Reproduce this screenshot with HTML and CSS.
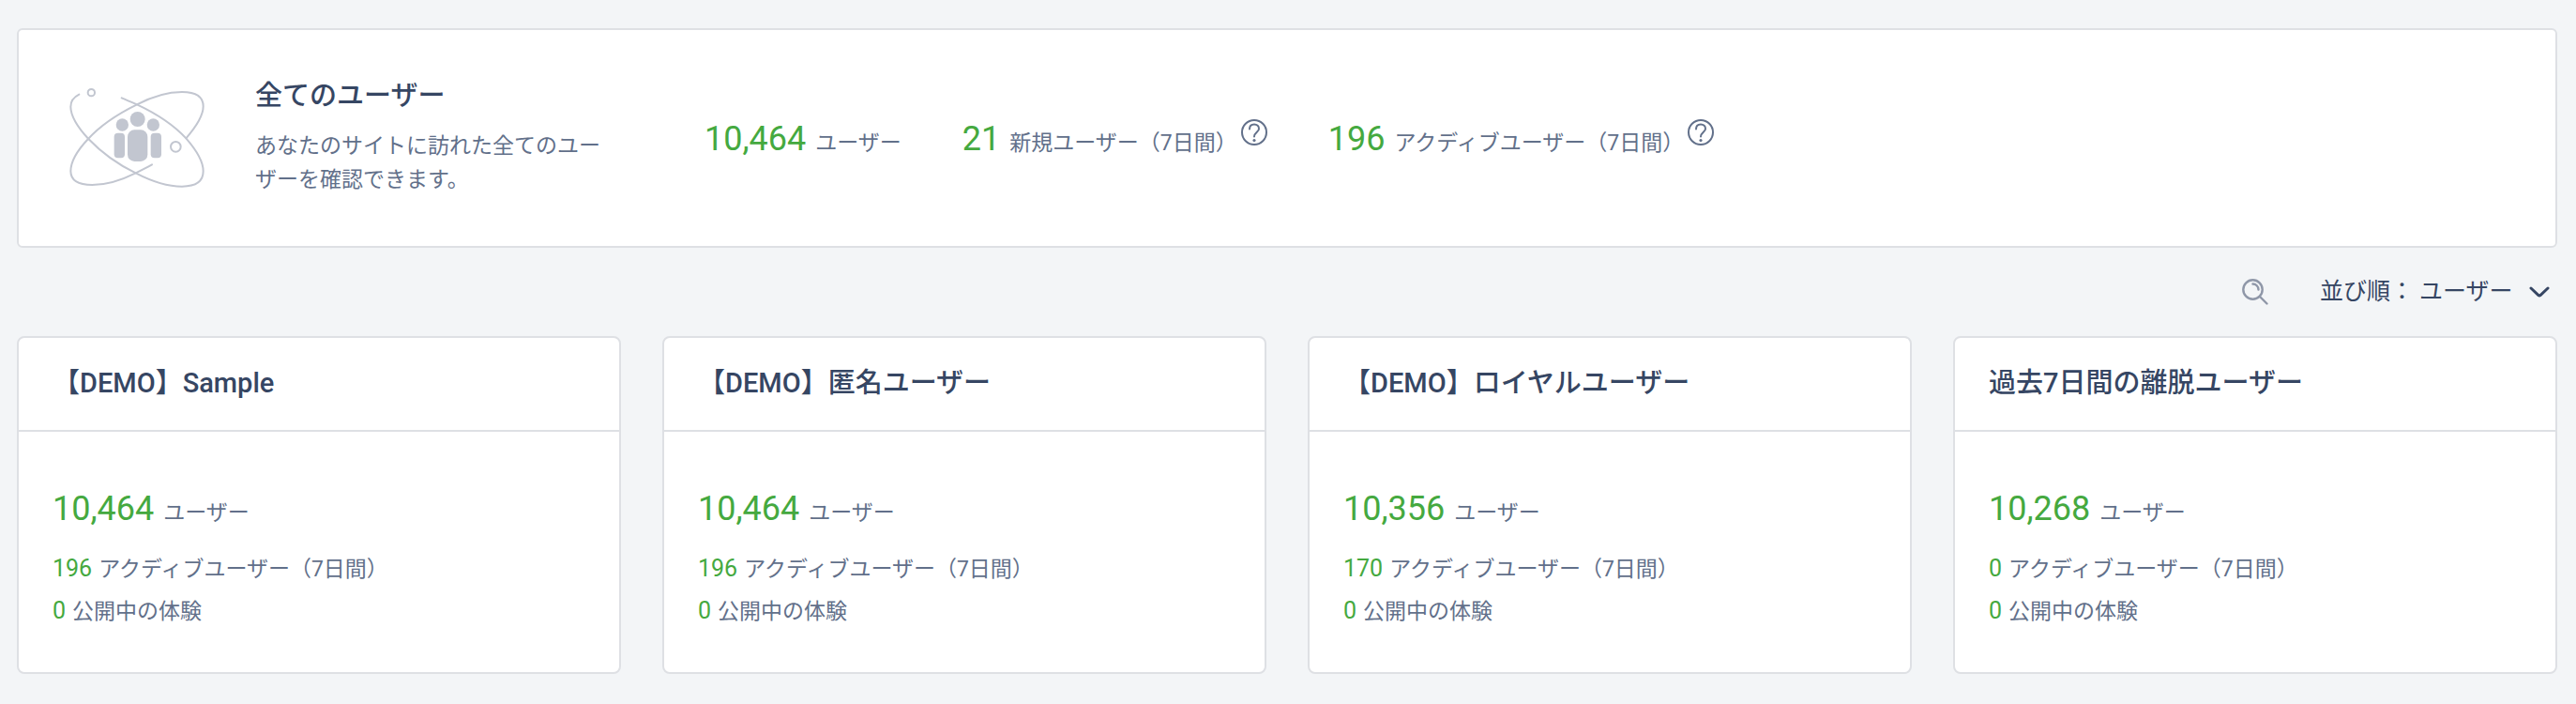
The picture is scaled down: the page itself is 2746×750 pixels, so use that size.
FILE: index.html
```html
<!DOCTYPE html>
<html lang="ja">
<head>
    <meta charset="UTF-8">
    <title>ユーザー</title>
    <link rel="stylesheet" href="styles.css">
</head>
<body>
    <section class="summary">
        <svg class="summary-icon" viewBox="72 42 432 324" aria-hidden="true">
            <g fill="none" stroke="#c2c6d0" stroke-width="6" stroke-linecap="round">
                <path d="M445 205C480 165 500 132 500 103C500 72 474 57 432 57C392 57 340 70 288 97C225 128 170 165 132 207C98 243 76 278 76 310C76 340 102 354 145 354C190 354 236 340 284 316C302 307 320 298 336 289"/>
                <path d="M103 65C85 74 76 88 76 104C76 135 97 168 133 207C172 248 226 288 284 316C338 344 390 359 432 359C475 359 500 343 500 310C500 278 480 245 445 205C408 165 350 126 288 97C272 90 256 83 239 76"/>
                <circle cx="142" cy="59" r="11"/>
                <circle cx="412" cy="232" r="16"/>
            </g>
            <g fill="#c2c6d0">
                <circle cx="290" cy="144" r="24"/>
                <circle cx="241" cy="162" r="20"/>
                <circle cx="340" cy="162" r="20"/>
                <rect x="215" y="188" width="34" height="80" rx="12"/>
                <rect x="258" y="178" width="64" height="101" rx="22"/>
                <rect x="332" y="188" width="34" height="80" rx="12"/>
            </g>
        </svg>
        <div class="summary-text">
            <h1 class="title">全てのユーザー</h1>
            <p>あなたのサイトに訪れた全てのユーザーを確認できます。</p>
        </div>
        <ul class="stats">
            <li><span class="num-large">10,464</span>ユーザー</li>
            <li>
                <span class="num-large">21</span>新規ユーザー（7日間）
                <button type="button" class="help" aria-label="ヘルプ">
                    <svg viewBox="0 0 28 28"><circle cx="14" cy="14" r="13"/><path d="M9 10.5C9 7.500 11 5.500 14 5.500S19 7.500 19 10.200C19 13.500 14 14 14 18.500"/><circle class="dot" cx="14" cy="22.500" r="1.600"/></svg>
                </button>
            </li>
            <li>
                <span class="num-large">196</span>アクディブユーザー（7日間）
                <button type="button" class="help" aria-label="ヘルプ">
                    <svg viewBox="0 0 28 28"><circle cx="14" cy="14" r="13"/><path d="M9 10.5C9 7.500 11 5.500 14 5.500S19 7.500 19 10.200C19 13.500 14 14 14 18.500"/><circle class="dot" cx="14" cy="22.500" r="1.600"/></svg>
                </button>
            </li>
        </ul>
    </section>

    <div class="toolbar">
        <button type="button" class="search" aria-label="検索">
            <svg viewBox="0 0 28 28"><circle cx="11.500" cy="11.500" r="10.200"/><path d="M11.500 5.500A6 6 0 0 1 17.500 11.500M19 19L26.500 26.500"/></svg>
        </button>
        <label class="sort">
            <span>並び順：</span>
            <select>
                <option>ユーザー</option>
            </select>
            <svg viewBox="0 0 22 12"><path d="M2 2L10 9.500Q11 10.300 12 9.500L20 2"/></svg>
        </label>
    </div>

    <main class="cards">
        <article class="card">
            <h2 class="title">【DEMO】Sample</h2>
            <div class="card-body">
                <p class="total"><span class="num-large">10,464</span>ユーザー</p>
                <p><span class="num">196</span>アクディブユーザー（7日間）</p>
                <p><span class="num">0</span>公開中の体験</p>
            </div>
        </article>
        <article class="card">
            <h2 class="title">【DEMO】匿名ユーザー</h2>
            <div class="card-body">
                <p class="total"><span class="num-large">10,464</span>ユーザー</p>
                <p><span class="num">196</span>アクディブユーザー（7日間）</p>
                <p><span class="num">0</span>公開中の体験</p>
            </div>
        </article>
        <article class="card">
            <h2 class="title">【DEMO】ロイヤルユーザー</h2>
            <div class="card-body">
                <p class="total"><span class="num-large">10,356</span>ユーザー</p>
                <p><span class="num">170</span>アクディブユーザー（7日間）</p>
                <p><span class="num">0</span>公開中の体験</p>
            </div>
        </article>
        <article class="card">
            <h2 class="title">過去7日間の離脱ユーザー</h2>
            <div class="card-body">
                <p class="total"><span class="num-large">10,268</span>ユーザー</p>
                <p><span class="num">0</span>アクディブユーザー（7日間）</p>
                <p><span class="num">0</span>公開中の体験</p>
            </div>
        </article>
    </main>
</body>
</html>
```
FILE: styles.css
```css
* {
    box-sizing: border-box;
}
body {
    margin: 0;
    padding: 30px 20px 32px 18px;
    background-color: #f3f5f7;
    color: #62708a;
    font-family: Roboto, "Noto Sans CJK JP", sans-serif;
    font-size: 23px;
    line-height: 36px;
}
h1, h2, p, ul {
    margin: 0;
    padding: 0;
}
button {
    padding: 0;
    border: none;
    background: none;
    cursor: pointer;
}
svg {
    display: block;
}
.title {
    color: #364663;
    font-size: 29px;
    font-weight: 500;
    line-height: 44px;
}
.num, .num-large {
    color: #45a93f;
    font-size: 25px;
    margin-right: 7px;
}
.num-large {
    font-size: 36px;
    margin-right: 10px;
}

/* all users */
.summary {
    display: flex;
    align-items: center;
    padding: 48px 54px;
    background: #fff;
    border: 2px solid #dee0e4;
    border-radius: 6px;
}
.summary-icon {
    width: 144px;
    height: 108px;
    margin-right: 54px;
    flex-shrink: 0;
}
.summary-text {
    width: 384px;
    margin-right: 95px;
    padding-bottom: 4px;
}
.summary-text p {
    margin-top: 14px;
}
.stats {
    display: flex;
    gap: 65px;
    padding-top: 6px;
    line-height: 42px;
    list-style: none;
}
.stats li {
    display: flex;
    align-items: baseline;
}
.help {
    align-self: flex-start;
    margin-left: 4px;
}
.help svg {
    width: 28px;
    height: 28px;
    fill: none;
    stroke: #62708a;
    stroke-width: 2;
    stroke-linecap: round;
}
.help .dot {
    fill: #62708a;
    stroke: none;
}

/* search and sort */
.toolbar {
    display: flex;
    justify-content: flex-end;
    align-items: center;
    gap: 55px;
    height: 94px;
    padding-right: 8px;
}
.search svg {
    width: 28px;
    height: 28px;
    fill: none;
    stroke: #8f97a8;
    stroke-width: 2.4;
    stroke-linecap: round;
}
.sort {
    display: flex;
    align-items: center;
    gap: 6px;
    color: #364663;
    font-size: 25px;
}
.sort select {
    appearance: none;
    padding: 0;
    border: none;
    background: none;
    color: inherit;
    font: inherit;
    cursor: pointer;
}
.sort svg {
    width: 22px;
    height: 12px;
    margin-left: 10px;
    fill: none;
    stroke: #364663;
    stroke-width: 3;
    stroke-linecap: round;
}

/* segment cards */
.cards {
    display: grid;
    grid-template-columns: repeat(4, 1fr);
    gap: 44px;
}
.card {
    background: #fff;
    border: 2px solid #dee0e4;
    border-radius: 8px;
}
.card .title {
    padding: 26px 36px 28px;
    border-bottom: 2px solid #dee0e4;
}
.card-body {
    padding: 60px 36px 42px;
    line-height: 44px;
}
.total {
    margin-bottom: 15px;
}
```
